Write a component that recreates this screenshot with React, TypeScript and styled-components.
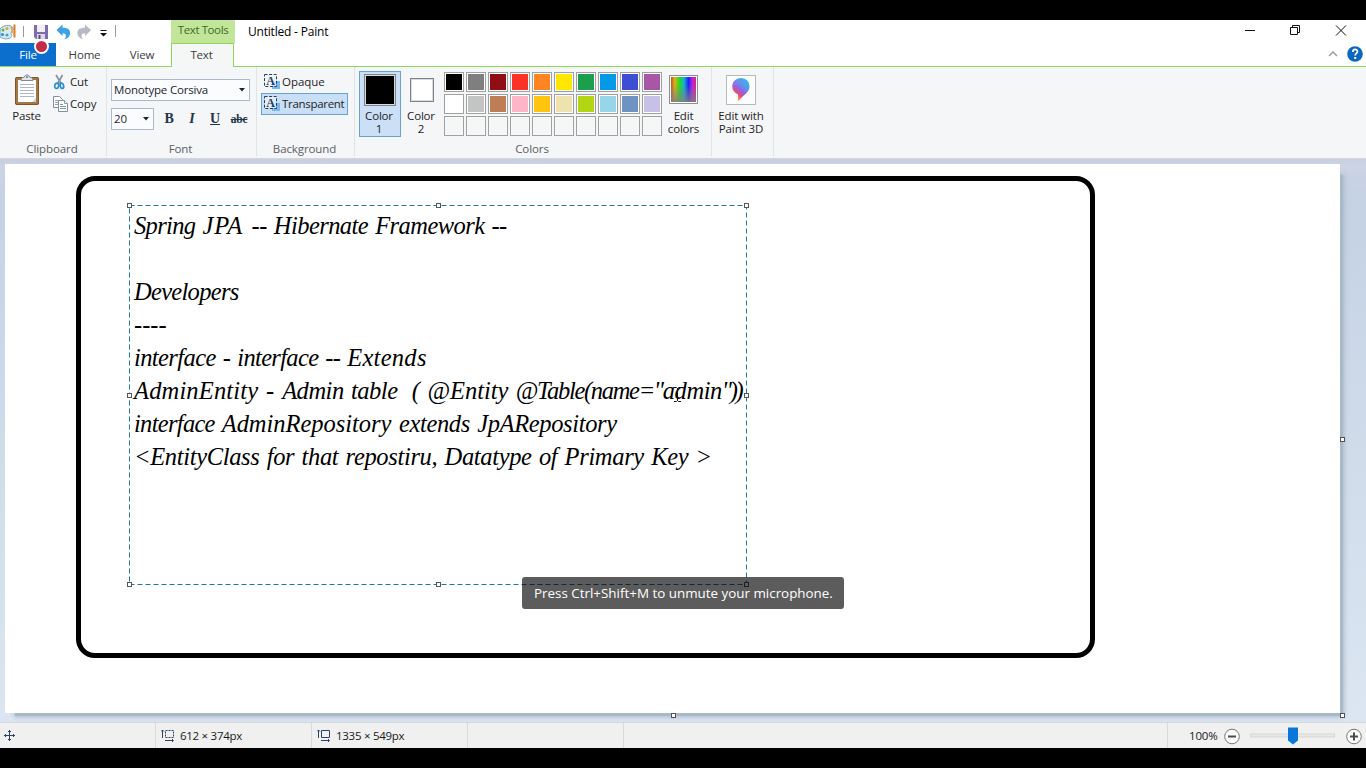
import React from 'react';
import styled, { createGlobalStyle, css } from 'styled-components';

const Global = createGlobalStyle`
  * { box-sizing: border-box; }
  html, body { margin: 0; padding: 0; background: #000; overflow: hidden; }
  svg { display: block; flex: none; }
`;

const Screen = styled.div`
  width: 1366px;
  height: 768px;
  padding: 20px 0;
  background: #000;
  font-family: 'Segoe UI', 'Open Sans', 'Noto Sans', sans-serif;
  font-size: 11.5px;
  line-height: 13px;
  letter-spacing: -0.18px;
  color: #1e1e1e;
`;

const Window = styled.div`
  display: flex;
  flex-direction: column;
  height: 728px;
  background: #fff;
`;

const Label = styled.span<{ $ls?: number }>`
  white-space: pre;
  letter-spacing: ${(p) => (p.$ls === undefined ? 'inherit' : `${p.$ls}px`)};
`;

const RowLabel = styled(Label)`
  padding-bottom: 2px;
`;

const SwatchLabel = styled(Label)`
  padding-right: 2px;
`;

/* Title bar */
const TitleBar = styled.header`
  display: flex;
  height: 23px;
  flex: none;
`;

const QuickAccess = styled.div`
  display: flex;
  width: 171px;
  height: 23px;
`;

const ToolTab = styled.div`
  width: 64px;
  padding-top: 3px;
  text-align: center;
  background: #c1e69a;
  color: #3f6a25;
`;

const WindowTitle = styled.div`
  flex: 1;
  padding: 5px 0 0 13px;
  font-size: 12px;
  color: #000;
`;

const WindowButtons = styled.div`
  display: flex;
  width: 140px;
`;

/* Tabs */
const TabStrip = styled.nav`
  display: flex;
  height: 24px;
  flex: none;
  border-bottom: 1px solid #92d65c;
`;

const Tab = styled.div<{ $w: number; $kind?: 'file' | 'active' }>`
  width: ${(p) => p.$w}px;
  height: 23px;
  padding-top: 5px;
  text-align: center;
  color: #3b3b3b;
  ${(p) =>
    p.$kind === 'file' &&
    css`
      background: #0c6fce;
      color: #fff;
    `}
  ${(p) =>
    p.$kind === 'active' &&
    css`
      height: 24px;
      padding: 4px 2px 0 0;
      background: #f5f7f7;
      border: 1px solid #92d65c;
      border-bottom: 0;
    `}
`;

const TabTools = styled.div`
  display: flex;
  margin-left: auto;
  width: 42px;
`;

/* Ribbon */
const Ribbon = styled.section`
  display: flex;
  height: 92px;
  flex: none;
  background: #f5f6f7;
  border-bottom: 1px solid #d3d7dc;
`;

const Group = styled.div<{ $w: number }>`
  display: flex;
  flex-direction: column;
  width: ${(p) => p.$w}px;
  height: 89px;
  border-right: 1px solid #e0e4e7;
`;

const GroupBody = styled.div<{ $pad?: string }>`
  display: flex;
  height: 75px;
  padding: ${(p) => p.$pad ?? '4px 0 0'};
`;

const GroupName = styled.div`
  padding-right: 2px;
  text-align: center;
  color: #5c6066;
  letter-spacing: -0.1px;
`;

const Stack = styled.div<{ $gap?: number }>`
  display: flex;
  flex-direction: column;
  gap: ${(p) => p.$gap ?? 0}px;
`;

const Row = styled.div<{ $gap?: number; $h?: number; $pad?: string }>`
  display: flex;
  align-items: center;
  height: ${(p) => (p.$h ? `${p.$h}px` : 'auto')};
  gap: ${(p) => p.$gap ?? 0}px;
  padding: ${(p) => p.$pad ?? '0'};
`;

const LargeButton = styled.div<{ $w: number; $pt: number; $on?: boolean; $gap: number }>`
  display: flex;
  flex-direction: column;
  align-items: center;
  width: ${(p) => p.$w}px;
  height: 66px;
  padding-top: ${(p) => p.$pt}px;
  gap: ${(p) => p.$gap}px;
  text-align: center;
  border: 1px solid ${(p) => (p.$on ? '#67a1d6' : 'transparent')};
  background: ${(p) => (p.$on ? '#cbe0f6' : 'transparent')};
`;

const Combo = styled.div<{ $w: number }>`
  display: flex;
  align-items: center;
  justify-content: space-between;
  width: ${(p) => p.$w}px;
  height: 22px;
  padding: 0 4px 0 2px;
  background: #fafcfd;
  border: 1px solid #abb9ca;
  color: #1b2433;
`;

const Glyph = styled.span<{ $w: number; $kind: 'b' | 'i' | 'u' | 's' }>`
  width: ${(p) => p.$w}px;
  text-align: center;
  font-family: 'Liberation Serif', serif;
  font-weight: 700;
  font-size: ${(p) => (p.$kind === 's' ? 11.5 : 14)}px;
  line-height: 16px;
  color: #22344c;
  font-style: ${(p) => (p.$kind === 'i' ? 'italic' : 'normal')};
  text-decoration: ${(p) => (p.$kind === 'u' ? 'underline' : p.$kind === 's' ? 'line-through' : 'none')};
`;

const ModeButton = styled.div<{ $on?: boolean }>`
  display: flex;
  align-items: center;
  width: 87px;
  height: 22px;
  padding-left: 2px;
  gap: 1px;
  border: 1px solid ${(p) => (p.$on ? '#67a1d6' : 'transparent')};
  background: ${(p) => (p.$on ? '#c9dff6' : 'transparent')};
`;

const BigSwatch = styled.div<{ $c: string; $s: number }>`
  width: ${(p) => p.$s}px;
  height: ${(p) => p.$s}px;
  background: ${(p) => p.$c};
  border: 1px solid #7f8388;
  box-shadow: inset 0 0 0 1px #d5dce4;
`;

const Palette = styled.div`
  display: grid;
  grid-template-columns: repeat(10, 20px);
  grid-auto-rows: 20px;
  gap: 2px;
`;

const Swatch = styled.div<{ $c?: string }>`
  border: 1px solid #a0a0a0;
  background: ${(p) => p.$c ?? '#f5f6f6'};
  box-shadow: inset 0 0 0 1px ${(p) => (p.$c ? '#fff' : '#f8f9f9')};
`;

/* Workspace */
const Workspace = styled.main`
  position: relative;
  height: 563px;
  flex: none;
  padding: 5px 26px 9px 5px;
  background: linear-gradient(#c9cfdf 0, #ccd3e4 6px, #c5d2e4 40px, #d0dcea 300px, #dce6f3 100%);
`;

const PageShadow = styled.div`
  position: absolute;
  left: 15px;
  top: 16px;
  width: 1328px;
  height: 541px;
  background: #a9b9c8;
  box-shadow: 0 0 5px 1px #a9b9c8;
`;

const Page = styled.div`
  position: relative;
  width: 1335px;
  height: 549px;
  background: #fff;
`;

const DrawnFrame = styled.div`
  position: absolute;
  left: 71px;
  top: 12px;
  width: 1019px;
  height: 482px;
  border: 5px solid #000;
  border-radius: 19px;
`;

const Selection = styled.svg`
  position: absolute;
  left: 121px;
  top: 38px;
`;

const TextBlock = styled.div`
  position: absolute;
  left: 128px;
  top: 45px;
  font-family: 'Monotype Corsiva', 'Liberation Serif', serif;
  font-style: italic;
  font-size: 24.5px;
  line-height: 33px;
  word-spacing: 1.5px;
  color: #000;
`;

const Line = styled.div`
  height: 33px;
  padding-left: 1px;
  white-space: pre;
`;

const Caret = styled.svg`
  position: absolute;
  left: 668px;
  top: 222px;
`;

const PageHandle = styled.i<{ $x: number; $y: number }>`
  position: absolute;
  left: ${(p) => p.$x}px;
  top: ${(p) => p.$y}px;
  width: 5px;
  height: 5px;
  background: #fff;
  border: 1px solid #4d5358;
`;

const Toast = styled.div`
  position: absolute;
  left: 522px;
  top: 418px;
  width: 322px;
  height: 32px;
  padding: 8px 0 0 12px;
  border-radius: 3px;
  background: rgba(0, 0, 0, 0.64);
  color: #fff;
  font-size: 13.4px;
  line-height: 17px;
`;

/* Status bar */
const StatusBar = styled.footer`
  display: flex;
  height: 26px;
  flex: none;
  background: #f0f0f0;
  border-top: 1px solid #d5dadc;
  color: #1a1a1a;
`;

const StatusCell = styled.div<{ $w: number; $pl?: number }>`
  display: flex;
  align-items: center;
  width: ${(p) => p.$w}px;
  padding-left: ${(p) => p.$pl ?? 5}px;
  gap: 5px;
  border-right: 1px solid #d9dadb;
`;

const ZoomArea = styled.div`
  display: flex;
  align-items: center;
  padding-left: 21px;
`;

const ZoomValue = styled.div`
  width: 29px;
`;

const RecordDot = styled.i`
  position: absolute;
  left: 34px;
  top: 39px;
  width: 15px;
  height: 15px;
  border-radius: 50%;
  background: #c52c49;
  border: 2px solid #fff;
`;

const Arrow = () => (
  <svg width="6" height="4" viewBox="0 0 6 4">
    <path d="M0 0h6L3 3.6z" fill="#1d2530" />
  </svg>
);

const QuickIcons = () => (
  <svg width="171" height="23" viewBox="0 20 171 23" fill="none">
    <path d="M0 29C3 25 11 24 13 28c1 3-2 3-2 5s2 3-1 5c-3 1.600-7 1-10-1z" fill="#d7ebf6" stroke="#78a5c2" />
    <circle cx="3" cy="30" r="1.500" fill="#67b04b" />
    <circle cx="7" cy="28.500" r="1.500" fill="#e1a13b" />
    <circle cx="2.500" cy="34.500" r="1.600" fill="#388bd0" />
    <circle cx="7" cy="35" r="1.600" fill="#42a6c0" />
    <path d="M14.500 24.500v13" stroke="#d97c27" strokeWidth="2" />
    <path d="M11 27l3 8" stroke="#e6a34d" strokeWidth="1.500" />
    <path d="M23.500 26v11M115.500 25v12" stroke="#9a9a9a" />
    <path d="M34 25h14v14H36l-2-2z" fill="#7d6da8" />
    <path d="M37 25h8v7h-8z" fill="#f0eef6" />
    <path d="M37 34h8v5h-8z" fill="#dcd8ea" />
    <path d="M38.500 35h2v4h-2z" fill="#58487f" />
    <path d="M56.500 30l6-5.500v3.200c5.500 0 8 2 7.500 6.100-.3 2.700-2 4.700-5.800 5.700 2.600-2.600 2.500-6.300-1.700-6.300v3z" fill="#3da2e4" />
    <path d="M91 30l-6-5.500v3.200c-5.500 0-8 2-7.500 6.100.3 2.700 2 4.700 5.800 5.700-2.600-2.600-2.500-6.300 1.700-6.300v3z" fill="#b5bac3" />
    <path d="M100.500 30.500h6" stroke="#111" />
    <path d="M100 33h7l-3.500 3.500z" fill="#111" />
  </svg>
);

const CaptionIcons = () => (
  <svg width="140" height="23" viewBox="1226 20 140 23" fill="none" stroke="#111">
    <path d="M1245 30.500h10" />
    <path d="M1290.500 27.500h7v7h-7zM1292.500 27v-1.500h7v7h-1.500" />
    <path d="M1336 25.500l10 10M1346 25.500l-10 10" />
  </svg>
);

const HelpIcons = () => (
  <svg width="42" height="23" viewBox="1324 43 42 23" fill="none">
    <path d="M1329 56l4-4 4 4" stroke="#999" strokeWidth="1.300" />
    <circle cx="1355" cy="54" r="7.800" fill="#0b67c0" />
    <path d="M1352.800 52c0-3.400 4.700-3.200 4.700-.5 0 1.800-2.300 1.900-2.300 3.900" stroke="#fff" strokeWidth="1.700" />
    <path d="M1354.200 57h2v1.900h-2z" fill="#fff" />
  </svg>
);

const PasteIcon = () => (
  <svg width="26" height="32" viewBox="14 74 26 32" fill="none">
    <rect x="15" y="77" width="24" height="28" rx="2" fill="#a57743" />
    <rect x="15.500" y="77.500" width="23" height="27" rx="1.500" stroke="#7f572b" />
    <path d="M18 80h18v22H18z" fill="#fdfdfe" />
    <path d="M20 84.500h14M20 87.500h14M20 90.500h14M20 93.500h14M20 96.500h14" stroke="#aab7c7" />
    <path d="M32 102h4v-4z" fill="#cdd4dd" />
    <path d="M21 80.500c0-3 2-3 3.500-3.500.3-2.800 4.700-2.800 5 0 1.500.5 3.500.5 3.500 3.500z" fill="#dfe4e8" stroke="#828990" />
    <circle cx="27" cy="77" r="1" fill="#70777e" />
  </svg>
);

const CutIcon = () => (
  <svg width="14" height="16" viewBox="0 0 14 16" fill="none">
    <path d="M3 1l5.500 9M9.500 1L4.500 10" stroke="#8494a2" strokeWidth="1.700" />
    <ellipse cx="3.700" cy="11.800" rx="2" ry="2.700" stroke="#2b8bd0" strokeWidth="1.700" transform="rotate(15 3.700 11.800)" />
    <ellipse cx="8.900" cy="11.800" rx="1.700" ry="2.700" stroke="#2b8bd0" strokeWidth="1.700" transform="rotate(-15 8.900 11.800)" />
  </svg>
);

const CopyIcon = () => (
  <svg width="16" height="16" viewBox="0 0 16 16" fill="#fff" stroke="#8290a0">
    <path d="M.5.500h6l3 3v8h-9z" />
    <path d="M2 4.500h4M2 6.500h4M2 8.500h4" stroke="#92a4b7" />
    <path d="M5.500 4.500h6l3 3v8h-9z" />
    <path d="M11.500 4.500v3h3M7 8.500h3M7 10.500h6M7 12.500h6" stroke="#7f9ab7" />
  </svg>
);

const ModeIcon = () => (
  <svg width="17" height="16" viewBox="0 0 17 16" fill="none">
    <path d="M8 7h8v8H8z" fill="#78b8f2" />
    <path d="M1 1h11v11H1z" fill="#eaf3fb" fillOpacity=".75" />
    <path d="M.5.500h12v12H.5z" stroke="#263d5c" strokeDasharray="3 1.600" />
    <text x="6.500" y="11" textAnchor="middle" fontFamily="Liberation Serif, serif" fontWeight="700" fontSize="12" fill="#263d5c">A</text>
  </svg>
);

const RainbowIcon = () => (
  <svg width="29" height="30" viewBox="0 0 29 30">
    <defs>
      <linearGradient id="hues">
        <stop offset="0" stopColor="#c65026" />
        <stop offset=".15" stopColor="#d8b31a" />
        <stop offset=".35" stopColor="#1fdc1f" />
        <stop offset=".52" stopColor="#12b4d0" />
        <stop offset=".7" stopColor="#1f1ff5" />
        <stop offset=".86" stopColor="#bc22ea" />
        <stop offset="1" stopColor="#e0266c" />
      </linearGradient>
      <linearGradient id="fade" x2="0" y2="1">
        <stop offset=".3" stopColor="#808080" stopOpacity="0" />
        <stop offset="1" stopColor="#808080" stopOpacity=".85" />
      </linearGradient>
    </defs>
    <rect x=".5" y=".5" width="28" height="28" fill="#fff" stroke="#8d9094" />
    <path d="M2 2h25v25H2z" fill="url(#hues)" />
    <path d="M2 2h25v25H2z" fill="url(#fade)" />
  </svg>
);

const Paint3DIcon = () => (
  <svg width="30" height="30" viewBox="0 0 30 30">
    <defs>
      <linearGradient id="drop" x1=".85" y1="0" x2=".25" y2="1">
        <stop offset="0" stopColor="#21c4e6" />
        <stop offset=".35" stopColor="#5e93ee" />
        <stop offset=".55" stopColor="#9a60dd" />
        <stop offset=".73" stopColor="#ec4770" />
        <stop offset="1" stopColor="#ffc02e" />
      </linearGradient>
    </defs>
    <rect x=".5" y=".5" width="29" height="29" fill="#fcfdfd" stroke="#b6babe" />
    <path d="M15 3c5 0 8.500 3.600 8.500 8.200 0 7-6.500 8.300-11.500 15.300-.5-3 .5-5 0-7C8.500 17.500 6.300 15 6.300 11.400 6.300 6.700 10 3 15 3z" fill="url(#drop)" />
    <path d="M7 9c3-4 10-5 15-1-5-2-11-1-15.500 5z" fill="#8f7df0" fillOpacity=".5" />
  </svg>
);

const MoveIcon = () => (
  <svg width="12" height="12" viewBox="0 0 12 12" fill="none" stroke="#2c4560">
    <path d="M5.500 0v11M0 5.500h11M4 2l1.500-1.500L7 2M4 9l1.500 1.500L7 9M2 4L.5 5.500 2 7M9 4l1.500 1.500L9 7" />
  </svg>
);

const SizeIcon = ({ dashed }: { dashed?: boolean }) => (
  <svg width="14" height="13" viewBox="0 0 14 13" fill="none" stroke="#2c4560">
    <path d="M4.500 1.500h8v7h-8z" strokeDasharray={dashed ? '2 1' : undefined} />
    <path d="M1.500 1v8M0 2.500L1.500 1 3 2.500M4 11.500h8M11 10l1.500 1.500L11 13" />
  </svg>
);

const ZoomSlider = () => (
  <svg width="148" height="24" viewBox="1218 723.500 148 24" fill="none">
    <circle cx="1232" cy="736" r="7.300" fill="#fbfbfb" stroke="#777" />
    <path d="M1228 736h8" stroke="#4c4c4c" strokeWidth="2" />
    <rect x="1250.500" y="733.500" width="84" height="3" fill="#e8eaea" stroke="#d3d6d6" />
    <path d="M1288 727h10v13l-5 4-5-4z" fill="#0877d9" />
    <circle cx="1354" cy="736" r="7.300" fill="#fbfbfb" stroke="#777" />
    <path d="M1350 736h8M1354 732v8" stroke="#4c4c4c" strokeWidth="2" />
  </svg>
);

const palette: (string | undefined)[] = [
  '#000000', '#7f7f7f', '#930d16', '#fb3225', '#ff8422', '#ffe700', '#1c9f4c', '#0299e8', '#3d4ed4', '#a856a5',
  '#ffffff', '#c3c5c5', '#bf7d55', '#ffb5c8', '#ffc40e', '#eee3ae', '#b3d614', '#96d5ea', '#6e92c1', '#c7c1e7',
  ...Array(10).fill(undefined),
];

/* Each line is a list of runs: the text and its tracking in pixels. */
const lines: [string, number][][] = [
  [['Spring ', -0.65], ['JPA ', 1.07], ['-- Hibernate Framework --', -0.56]],
  [],
  [['Developers', -0.7]],
  [['----', 0]],
  [['interface - ', -0.6], ['interface -- ', -0.67], ['Extends', 0.27]],
  [['AdminEntity - ', 0.16], ['Admin table  ', -0.47], ['( @Entity ', -0.05], ['@Table(name="', -1.32], ['admin', -0.45], ['"))', -2.4]],
  [['interface ', -0.7], ['AdminRepository ', -0.03], ['extends JpARepository', -0.36]],
  [['<EntityClass for that repostiru, Datatype of Primary Key >', -0.34]],
];

const handles: [number, number][] = [
  [3, 3], [312, 3], [620, 3], [3, 193], [620, 193], [3, 382], [312, 382], [620, 382],
];

export default function App() {
  return (
    <Screen>
      <Global />
      <Window>
        <TitleBar>
          <QuickAccess><QuickIcons /></QuickAccess>
          <ToolTab><Label $ls={-0.4}>Text Tools</Label></ToolTab>
          <WindowTitle><Label $ls={-0.2}>Untitled - Paint</Label></WindowTitle>
          <WindowButtons><CaptionIcons /></WindowButtons>
        </TitleBar>
        <TabStrip>
          <Tab $w={56} $kind="file">File</Tab>
          <Tab $w={57}>Home</Tab>
          <Tab $w={58}>View</Tab>
          <Tab $w={63} $kind="active">Text</Tab>
          <TabTools><HelpIcons /></TabTools>
        </TabStrip>

        <Ribbon>
          <Group $w={107}>
            <GroupBody>
              <LargeButton $w={53} $pt={2} $gap={3}>
                <PasteIcon />
                <Label>Paste</Label>
              </LargeButton>
              <Stack>
                <Row $h={22} $gap={3}><CutIcon /><RowLabel>Cut</RowLabel></Row>
                <Row $h={22} $gap={1}><CopyIcon /><RowLabel>Copy</RowLabel></Row>
              </Stack>
            </GroupBody>
            <GroupName>Clipboard</GroupName>
          </Group>
          <Group $w={150}>
            <GroupBody $pad="12px 0 0 4px">
              <Stack $gap={7}>
                <Combo $w={139}><RowLabel>Monotype Corsiva</RowLabel><Arrow /></Combo>
                <Row>
                  <Combo $w={43}><RowLabel>20</RowLabel><Arrow /></Combo>
                  <Row $pad="0 0 0 3px">
                    <Glyph $w={24} $kind="b">B</Glyph>
                    <Glyph $w={22} $kind="i">I</Glyph>
                    <Glyph $w={24} $kind="u">U</Glyph>
                    <Glyph $w={24} $kind="s">abc</Glyph>
                  </Row>
                </Row>
              </Stack>
            </GroupBody>
            <GroupName>Font</GroupName>
          </Group>
          <Group $w={98}>
            <GroupBody $pad="4px 0 0 4px">
              <Stack>
                <ModeButton><ModeIcon /><RowLabel $ls={-0.05}>Opaque</RowLabel></ModeButton>
                <ModeButton $on><ModeIcon /><RowLabel $ls={-0.3}>Transparent</RowLabel></ModeButton>
              </Stack>
            </GroupBody>
            <GroupName>Background</GroupName>
          </Group>
          <Group $w={357}>
            <GroupBody $pad="4px 0 0 4px">
              <LargeButton $w={42} $pt={2} $gap={3} $on>
                <BigSwatch $c="#000" $s={32} />
                <SwatchLabel>{'Color\n1'}</SwatchLabel>
              </LargeButton>
              <LargeButton $w={42} $pt={6} $gap={7}>
                <BigSwatch $c="#fff" $s={24} />
                <SwatchLabel>{'Color\n2'}</SwatchLabel>
              </LargeButton>
              <Row $pad="0 0 5px 1px">
                <Palette>
                  {palette.map((c, i) => <Swatch key={i} $c={c} />)}
                </Palette>
              </Row>
              <LargeButton $w={43} $pt={3} $gap={4}>
                <RainbowIcon />
                <Label>{'Edit\ncolors'}</Label>
              </LargeButton>
            </GroupBody>
            <GroupName>Colors</GroupName>
          </Group>
          <Group $w={62}>
            <GroupBody>
              <LargeButton $w={58} $pt={3} $gap={4}>
                <Paint3DIcon />
                <Label $ls={-0.1}>{'Edit with\nPaint 3D'}</Label>
              </LargeButton>
            </GroupBody>
          </Group>
        </Ribbon>

        <Workspace>
          <PageShadow />
          <Page>
            <DrawnFrame />
            <TextBlock>
              {lines.map((runs, i) => (
                <Line key={i}>
                  {runs.map(([text, ls], j) => <Label key={j} $ls={ls}>{text}</Label>)}
                </Line>
              ))}
            </TextBlock>
            <Selection width="630" height="390" viewBox="0 0 630 390" fill="none">
              <rect x="3.500" y="3.500" width="617" height="379" stroke="#1b77a8" strokeDasharray="5 3" />
              {handles.map(([x, y], i) => (
                <rect key={i} x={x - 1.5} y={y - 1.5} width="4" height="4" fill="#fff" stroke="#53585c" />
              ))}
            </Selection>
            <Caret width="9" height="18" viewBox="0 0 9 18" fill="none" stroke="#111">
              <path d="M1 1.500h2.500l1 1 1-1H8M4.500 2v13M1 15.500h2.500l1-1 1 1H8" />
            </Caret>
          </Page>
          <PageHandle $x={671} $y={554} />
          <PageHandle $x={1340} $y={554} />
          <PageHandle $x={1340} $y={278} />
          <Toast><Label $ls={0}>Press Ctrl+Shift+M to unmute your microphone.</Label></Toast>
        </Workspace>

        <StatusBar>
          <StatusCell $w={156} $pl={4}><MoveIcon /></StatusCell>
          <StatusCell $w={156}><SizeIcon dashed /><Label $ls={-0.28}>612 × 374px</Label></StatusCell>
          <StatusCell $w={156}><SizeIcon /><Label $ls={-0.28}>1335 × 549px</Label></StatusCell>
          <StatusCell $w={156} />
          <StatusCell $w={544} />
          <ZoomArea><ZoomValue>100%</ZoomValue><ZoomSlider /></ZoomArea>
        </StatusBar>
      </Window>
      <RecordDot />
    </Screen>
  );
}
